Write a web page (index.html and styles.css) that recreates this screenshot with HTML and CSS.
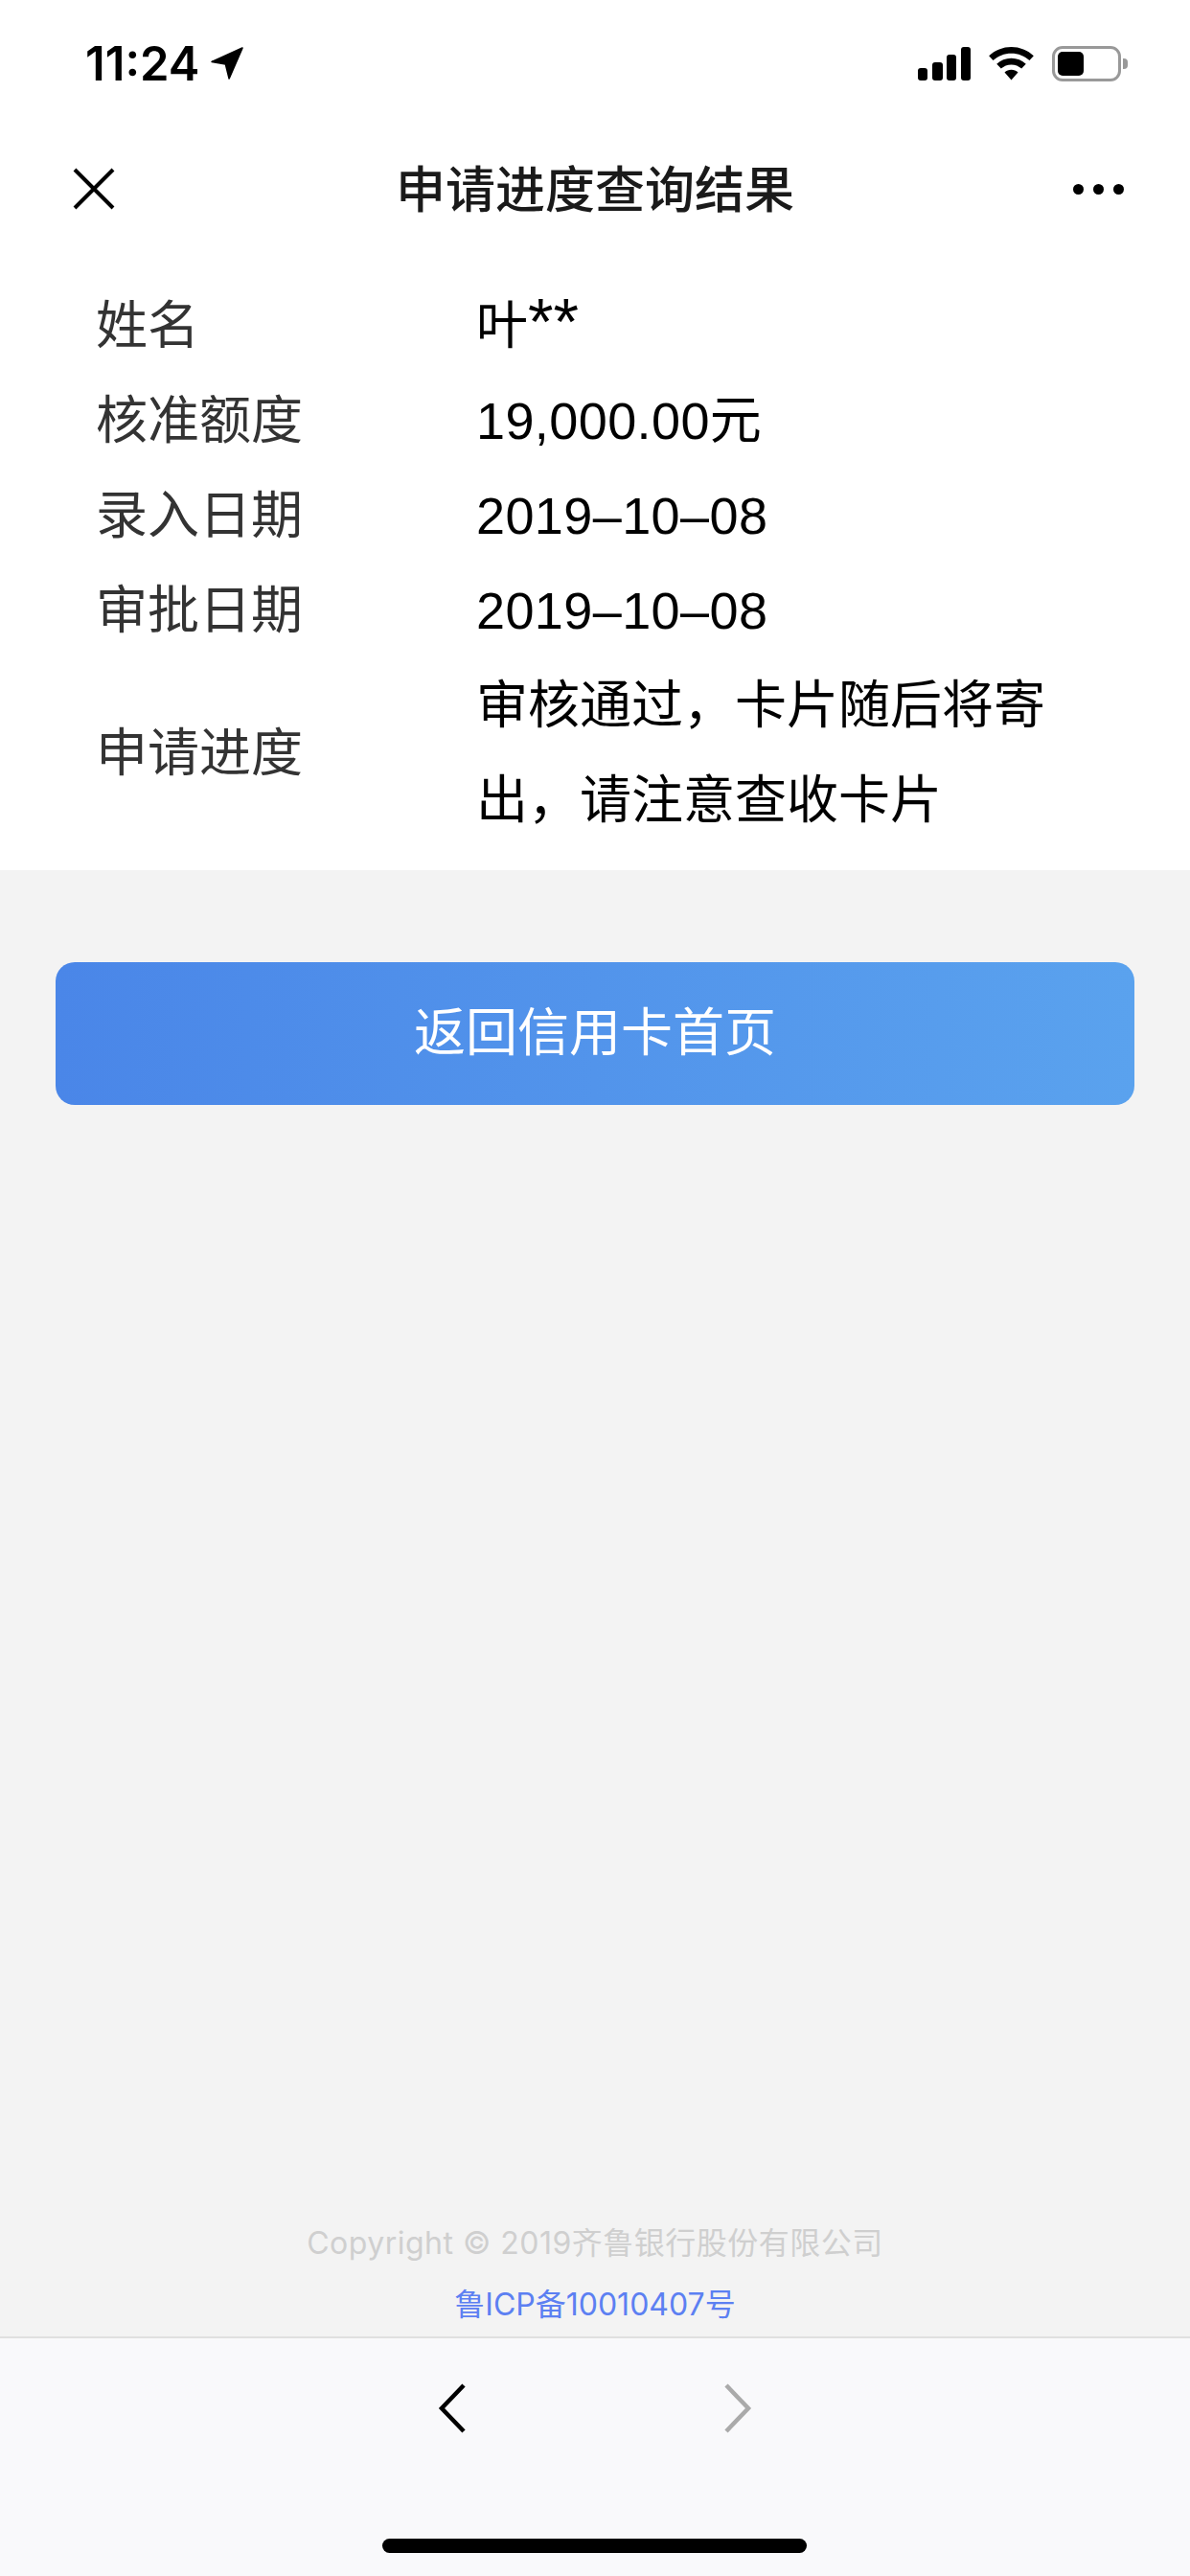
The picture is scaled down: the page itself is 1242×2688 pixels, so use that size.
FILE: index.html
```html
<!DOCTYPE html>
<html lang="zh-CN">
<head>
<meta charset="utf-8">
<title>申请进度查询结果</title>
<link rel="stylesheet" href="styles.css">
</head>
<body>
<div class="phone">
  <header class="top">
    <div class="status">
      <div class="clock"><span>11:24</span>
        <svg class="loc" viewBox="0 0 32 32"><path d="M31 1 1 14.500l13.500 2.500L18 31z" fill="#000" stroke="#000" stroke-width="1.500" stroke-linejoin="round"/></svg>
      </div>
      <div class="sys">
        <svg class="signal" viewBox="0 0 55 35"><rect x="0" y="22" width="10" height="13" rx="3"/><rect x="15" y="16" width="11" height="19" rx="3"/><rect x="30" y="8" width="10" height="27" rx="3"/><rect x="45" y="0" width="10" height="35" rx="3"/></svg>
        <svg class="wifi" viewBox="0 0 48 36"><path d="M24 0c9 0 17.500 3.500 24 9.500l-4.500 5C38.300 9.700 31.500 7 24 7S9.700 9.700 4.500 14.500L0 9.500C6.500 3.500 15 0 24 0z"/><path d="M24 12c6 0 11.500 2.300 15.700 6.200l-4.700 5C32 20.600 28.200 19 24 19s-8 1.600-11 4.200l-4.700-5C12.500 14.300 18 12 24 12z"/><path d="M24 24.500c2.800 0 5.200 1 7.200 2.700L24 35.500l-7.200-8.300c2-1.700 4.400-2.700 7.200-2.700z"/></svg>
        <div class="battery"><div class="cell"><div class="charge"></div></div><div class="nub"></div></div>
      </div>
    </div>
    <nav class="titlebar">
      <svg class="close" viewBox="0 0 44 44"><path d="M2 2 42 42M42 2 2 42" stroke="#000" stroke-width="4" fill="none"/></svg>
      <h1 class="title">申请进度查询结果</h1>
      <div class="more"><i></i><i></i><i></i></div>
    </nav>
  </header>
  <section class="info">
    <div class="row"><div class="label">姓名</div><div class="value">叶<span class="mask">**</span></div></div>
    <div class="row"><div class="label">核准额度</div><div class="value"><span class="num">19,000.00</span>元</div></div>
    <div class="row"><div class="label">录入日期</div><div class="value"><span class="num">2019–10–08</span></div></div>
    <div class="row"><div class="label">审批日期</div><div class="value"><span class="num">2019–10–08</span></div></div>
    <div class="row"><div class="label">申请进度</div><div class="value">审核通过，卡片随后将寄出，请注意查收卡片</div></div>
  </section>
  <main class="content">
    <button class="back">返回信用卡首页</button>
    <footer class="foot">
      <p class="copy">Copyright © 2019齐鲁银行股份有限公司</p>
      <p class="icp">鲁ICP备10010407号</p>
    </footer>
  </main>
  <div class="toolbar">
    <div class="arrows">
      <svg class="arrow" viewBox="0 0 30 52"><path d="M27 2 4 26l23 24" fill="none" stroke="#000" stroke-width="4.500"/></svg>
      <svg class="arrow" viewBox="0 0 30 52"><path d="M3 2l23 24L3 50" fill="none" stroke="#aaa" stroke-width="4.500"/></svg>
    </div>
    <div class="home"></div>
  </div>
</div>
</body>
</html>
```
FILE: styles.css
```css
* { box-sizing: border-box; margin: 0; padding: 0; }
html, body { width: 1242px; height: 2688px; overflow: hidden; }
body { font-family: "Liberation Sans", "Noto Sans CJK SC", sans-serif; background: #f3f3f3; }
.phone { width: 1242px; height: 2688px; display: flex; flex-direction: column; }
.top { background: #fff; height: 282px; flex: none; }
.status { height: 132px; padding: 40px 65px 0 89px; display: flex; justify-content: space-between; align-items: flex-start; }
.clock { display: flex; align-items: center; gap: 12px; height: 52px; font-family: Inter, "Liberation Sans", sans-serif; font-size: 49px; font-weight: 600; color: #000; }
.loc { width: 34px; height: 34px; }
.sys { display: flex; align-items: center; gap: 19px; height: 52px; }
.signal { width: 55px; height: 35px; fill: #000; }
.wifi { width: 47px; height: 35px; fill: #000; }
.battery { display: flex; align-items: center; gap: 2px; }
.cell { width: 72px; height: 37px; border: 3.500px solid #999; border-radius: 11px; padding: 3px; }
.charge { width: 27px; height: 100%; background: #000; border-radius: 5px; }
.nub { width: 5px; height: 11px; background: #999; border-radius: 0 4px 4px 0; }
.titlebar { height: 130px; padding: 0 69px; display: grid; grid-template-columns: 1fr auto 1fr; align-items: center; }
.close { width: 44px; height: 44px; margin-left: 7px; }
.title { font-size: 52px; font-weight: 500; color: #1a1a1a; font-family: "Noto Sans CJK SC", sans-serif; padding-bottom: 5px; }
.more { display: flex; gap: 10px; justify-self: end; }
.more i { width: 11px; height: 11px; border-radius: 50%; background: #000; }
.info { background: #fff; height: 626px; flex: none; padding: 9px 0 0 100px; }
.row { display: flex; align-items: center; min-height: 99px; }
.label { width: 397px; flex: none; font-size: 54px; line-height: 99px; color: #333; font-weight: 400; }
.value { width: 612px; font-size: 54px; line-height: 99px; color: #000; }
.num { letter-spacing: 0.4px; }
.mask { font-size: 68px; line-height: 1px; }
.content { flex: 1; display: flex; flex-direction: column; padding: 96px 58px 0; }
.back { height: 149px; border: 0; border-radius: 20px; padding-bottom: 10px; background: linear-gradient(90deg, #4a86e8, #5aa2ee); color: #fff; font-size: 54px; font-family: "Noto Sans CJK SC", sans-serif; font-weight: 400; }
.foot { margin-top: auto; text-align: center; font-family: Inter, "Noto Sans CJK SC", sans-serif; font-size: 32px; line-height: 66px; }
.copy { color: #cfcfcf; letter-spacing: 0.5px; margin-bottom: -2px; }
.icp { color: #5c80f2; }
.toolbar { height: 250px; flex: none; background: #f9f9fb; border-top: 2px solid #e0e0e0; position: relative; }
.arrows { display: flex; justify-content: center; gap: 268px; padding-top: 47px; }
.arrow { width: 30px; height: 52px; }
.home { position: absolute; left: 399px; top: 209px; width: 443px; height: 15px; border-radius: 8px; background: #000; }
```
